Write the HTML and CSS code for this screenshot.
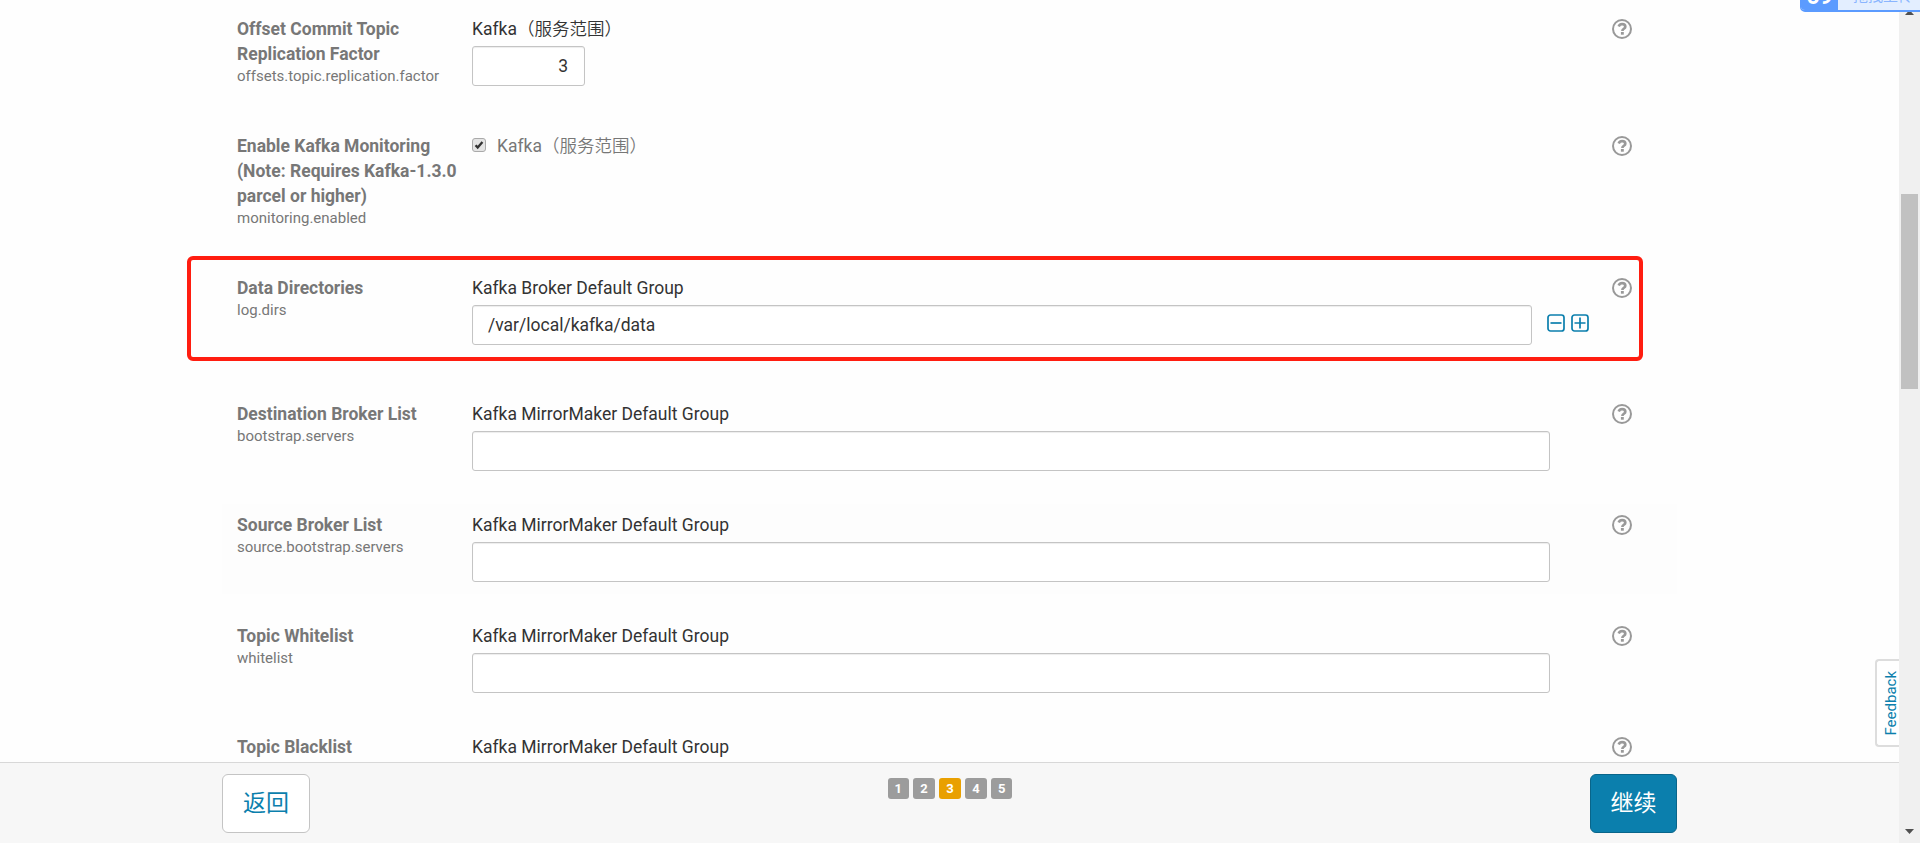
FILE: index.html
```html
<!DOCTYPE html>
<html lang="zh-CN">
<head>
<meta charset="utf-8">
<title>Kafka</title>
<link rel="stylesheet" href="styles.css">
</head>
<body>
<svg class="defs" width="0" height="0">
  <symbol id="help" viewBox="0 0 20 20">
    <circle cx="10" cy="10" r="9" fill="none" stroke="currentColor" stroke-width="2"/>
    <path d="M6.700 7.500C7.400 5.900 8.500 5.200 10.100 5.200c1.900 0 3.200 1 3.200 2.500 0 2.100-2.900 2-2.900 4.200" fill="none" stroke="currentColor" stroke-width="2.700"/>
    <rect x="8.900" y="13" width="2.900" height="2.700" fill="currentColor"/>
  </symbol>
</svg>
<div class="page">
  <main class="content">
    <div class="row">
      <div class="label"><div class="name">Offset Commit Topic Replication Factor</div><div class="key">offsets.topic.replication.factor</div></div>
      <div class="field"><div class="group mixed">Kafka<span class="cjk">（服务范围）</span></div><div class="input number">3</div></div>
      <svg class="help"><use href="#help"/></svg>
    </div>
    <div class="row">
      <div class="label"><div class="name">Enable Kafka Monitoring (Note: Requires Kafka-1.3.0 parcel or higher)</div><div class="key">monitoring.enabled</div></div>
      <div class="field"><div class="group mixed check"><span class="box"><svg viewBox="0 0 14 14"><path d="M3 7.200l2.500 2.800L11 3.600" fill="none" stroke="#333" stroke-width="2.700"/></svg></span><span>Kafka<span class="cjk">（服务范围）</span></span></div></div>
      <svg class="help"><use href="#help"/></svg>
    </div>
    <div class="row">
      <div class="label"><div class="name">Data Directories</div><div class="key">log.dirs</div></div>
      <div class="field"><div class="group">Kafka Broker Default Group</div>
        <div class="entry"><div class="input">/var/local/kafka/data</div>
          <div class="tools">
            <svg viewBox="0 0 18 18"><rect x="1" y="1" width="16" height="16" rx="2.500"/><path d="M3.500 9h11"/></svg>
            <svg viewBox="0 0 18 18"><rect x="1" y="1" width="16" height="16" rx="2.500"/><path d="M3.500 9h11M9 3.500v11"/></svg>
          </div>
        </div>
      </div>
      <svg class="help"><use href="#help"/></svg>
      <div class="mark"></div>
    </div>
    <div class="row">
      <div class="label"><div class="name">Destination Broker List</div><div class="key">bootstrap.servers</div></div>
      <div class="field"><div class="group">Kafka MirrorMaker Default Group</div><div class="input"></div></div>
      <svg class="help"><use href="#help"/></svg>
    </div>
    <div class="row hover">
      <div class="label"><div class="name">Source Broker List</div><div class="key">source.bootstrap.servers</div></div>
      <div class="field"><div class="group">Kafka MirrorMaker Default Group</div><div class="input"></div></div>
      <svg class="help"><use href="#help"/></svg>
    </div>
    <div class="row">
      <div class="label"><div class="name">Topic Whitelist</div><div class="key">whitelist</div></div>
      <div class="field"><div class="group">Kafka MirrorMaker Default Group</div><div class="input"></div></div>
      <svg class="help"><use href="#help"/></svg>
    </div>
    <div class="row">
      <div class="label"><div class="name">Topic Blacklist</div></div>
      <div class="field"><div class="group">Kafka MirrorMaker Default Group</div></div>
      <svg class="help"><use href="#help"/></svg>
    </div>
  </main>
  <footer class="footer">
    <div class="bar">
      <div class="btn">返回</div>
      <div class="steps"><span>1</span><span>2</span><span class="on">3</span><span>4</span><span>5</span></div>
      <div class="btn primary">继续</div>
    </div>
  </footer>
</div>
<aside class="scroll">
  <svg class="arrow" viewBox="0 0 9 5"><path d="M0 5h9L4.500 0z"/></svg>
  <div class="thumb"></div>
  <svg class="arrow" viewBox="0 0 9 5"><path d="M0 0h9L4.500 5z"/></svg>
</aside>
<div class="feedback"><span>Feedback</span></div>
<div class="upload"><b>69</b><span>拖拽上传</span></div>
</body>
</html>
```
FILE: styles.css
```css
* { box-sizing: border-box; }
body {
  margin: 0;
  width: 1920px;
  height: 843px;
  overflow: hidden;
  display: flex;
  position: relative;
  background: #fefefe;
  color: #333;
  font: 17.5px/25px Roboto, "Noto Sans CJK SC", sans-serif;
}
.defs { position: absolute; }
.page { width: 1899px; height: 843px; display: flex; flex-direction: column; }
.content { flex: 1; min-height: 0; overflow: hidden; padding: 8px 222px 0; display: flex; flex-direction: column; gap: 21px; }
.row { flex: none; position: relative; display: grid; grid-template-columns: 235px 1078px 1fr; padding: 8px 15px 12px; }
.hover { background: #fdfdfd; }
.label { color: #777; padding-right: 10px; }
.name { font-weight: bold; padding-top: 1px; margin-bottom: -1px; }
.key { font-size: 15px; line-height: 20px; padding-bottom: 6px; white-space: nowrap; }
.group { height: 25px; padding-top: 1px; white-space: nowrap; }
.mixed { padding-top: 0; line-height: 24px; }
.cjk { font-family: "Noto Sans CJK SC", sans-serif; font-weight: 350; }
.input {
  height: 40px;
  margin-top: 5px;
  padding: 0 15px;
  line-height: 38px;
  border: 1px solid #c4c4c4;
  border-radius: 3px;
  background: #fff;
  box-shadow: inset 0 1px 1px rgba(0, 0, 0, .075);
}
.number { width: 113px; padding-right: 16px; text-align: right; }
.check { display: flex; align-items: center; gap: 11px; color: #777; }
.box { width: 14px; height: 14px; margin-top: -1px; border: 1px solid #aaa; border-radius: 3px; background: #e4e4e4; display: flex; }
.box svg { width: 12px; height: 12px; }
.entry { display: grid; grid-template-columns: 1060px auto; column-gap: 15px; margin-bottom: 15px; }
.tools { display: flex; gap: 5.5px; padding-top: 14px; }
.tools svg { width: 18px; height: 18px; fill: none; stroke: #0b7fad; stroke-width: 1.7; flex: none; }
.help { width: 20px; height: 20px; margin: 3px 0 0 62px; color: #999; }
.mark { position: absolute; left: -35px; top: -11px; width: 1456px; height: 105px; border: 4px solid #ff1d10; border-radius: 6px; }
.footer { height: 81px; background: #f7f7f7; border-top: 1px solid #d8d8d8; padding: 11px 222px 0; }
.bar { display: flex; justify-content: space-between; align-items: flex-start; }
.btn { width: 88px; height: 59px; border: 1px solid #c4c4c4; border-radius: 6px; background: #fff; color: #0b7fad; font-size: 23px; line-height: 58px; text-align: center; }
.primary { width: 87px; background: #0b7fad; border-color: #09658a; color: #fff; }
.steps { display: flex; gap: 4.5px; padding-top: 4px; }
.steps span { width: 21.4px; height: 21px; border-radius: 3px; background: #9c9c9c; color: #fff; font-size: 13px; font-weight: bold; line-height: 21px; text-align: center; }
.steps .on { background: #e9a000; }
.scroll { width: 21px; height: 843px; background: #f0f0f0; display: flex; flex-direction: column; align-items: center; padding: 10px 0 9px; }
.arrow { width: 9px; height: 5px; fill: #505050; flex: none; }
.thumb { width: 17px; height: 195px; margin-top: 179px; margin-bottom: auto; background: #c1c1c1; }
.feedback { position: absolute; left: 1875px; top: 659px; width: 24px; height: 88px; border: 2px solid #ddd; border-right: 0; border-radius: 4px 0 0 4px; background: #fff; color: #0b7fad; font-size: 15px; line-height: 22px; display: flex; align-items: center; justify-content: center; }
.feedback span { writing-mode: vertical-rl; transform: rotate(180deg); margin-left: 6px; }
.upload { position: absolute; left: 1800px; top: -24px; width: 130px; height: 36px; border: 1px solid #5b9bff; border-bottom-width: 2px; border-radius: 5px; background: #e3eeff; color: #8ab5ff; display: flex; overflow: hidden; font-size: 15px; line-height: 39px; }
.upload b { width: 37px; background: #5b9bff; color: #fff; font-size: 23px; text-align: center; line-height: 39px; }
.upload span { margin-left: 15px; }
```
